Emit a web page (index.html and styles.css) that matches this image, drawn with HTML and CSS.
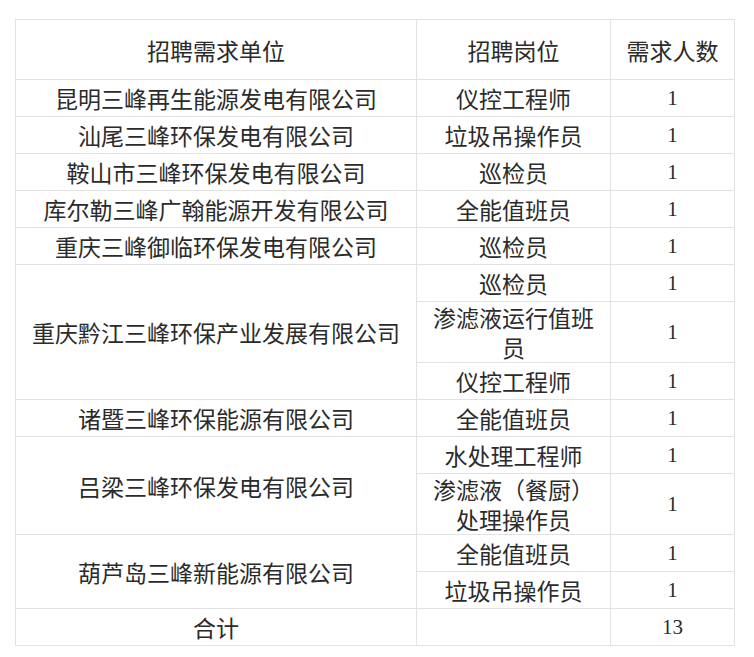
FILE: index.html
```html
<!DOCTYPE html>
<html lang="zh-CN">
<head>
<meta charset="utf-8">
<title>招聘需求</title>
<link rel="stylesheet" href="styles.css">
</head>
<body>
<table class="jobs">
  <colgroup>
    <col class="c-unit">
    <col class="c-post">
    <col class="c-num">
  </colgroup>
  <thead>
    <tr class="head">
      <th>招聘需求单位</th>
      <th>招聘岗位</th>
      <th>需求人数</th>
    </tr>
  </thead>
  <tbody>
    <tr><td>昆明三峰再生能源发电有限公司</td><td>仪控工程师</td><td class="num">1</td></tr>
    <tr><td>汕尾三峰环保发电有限公司</td><td>垃圾吊操作员</td><td class="num">1</td></tr>
    <tr><td>鞍山市三峰环保发电有限公司</td><td>巡检员</td><td class="num">1</td></tr>
    <tr><td>库尔勒三峰广翰能源开发有限公司</td><td>全能值班员</td><td class="num">1</td></tr>
    <tr><td>重庆三峰御临环保发电有限公司</td><td>巡检员</td><td class="num">1</td></tr>
    <tr><td rowspan="3">重庆黔江三峰环保产业发展有限公司</td><td>巡检员</td><td class="num">1</td></tr>
    <tr><td>渗滤液运行值班员</td><td class="num">1</td></tr>
    <tr><td>仪控工程师</td><td class="num">1</td></tr>
    <tr><td>诸暨三峰环保能源有限公司</td><td>全能值班员</td><td class="num">1</td></tr>
    <tr><td rowspan="2">吕梁三峰环保发电有限公司</td><td>水处理工程师</td><td class="num">1</td></tr>
    <tr><td>渗滤液（餐厨）处理操作员</td><td class="num">1</td></tr>
    <tr><td rowspan="2">葫芦岛三峰新能源有限公司</td><td>全能值班员</td><td class="num">1</td></tr>
    <tr><td>垃圾吊操作员</td><td class="num">1</td></tr>
    <tr><td>合计</td><td></td><td class="num">13</td></tr>
  </tbody>
</table>
</body>
</html>
```

FILE: styles.css
```css
html, body {
  margin: 0;
  padding: 0;
  background: #ffffff;
}

body {
  padding: 19px 0 0 15px;
}

.jobs {
  border-collapse: collapse;
  table-layout: fixed;
  width: 719px;
  font-family: "Noto Sans CJK SC", "Noto Sans", sans-serif;
  font-size: 23px;
  line-height: 30px;
  color: #2b2b2b;
}

.c-unit { width: 401px; }
.c-post { width: 194px; }
.c-num { width: 124px; }

.jobs th,
.jobs td {
  border: 1px solid #e2e2e2;
  text-align: center;
  vertical-align: middle;
  padding: 0 8px;
  font-weight: normal;
}

.jobs td {
  height: 36px;
}

.jobs .head th {
  height: 59px;
}

.jobs td.num {
  font-family: "Liberation Serif", "Times New Roman", serif;
  font-size: 21px;
}
```
